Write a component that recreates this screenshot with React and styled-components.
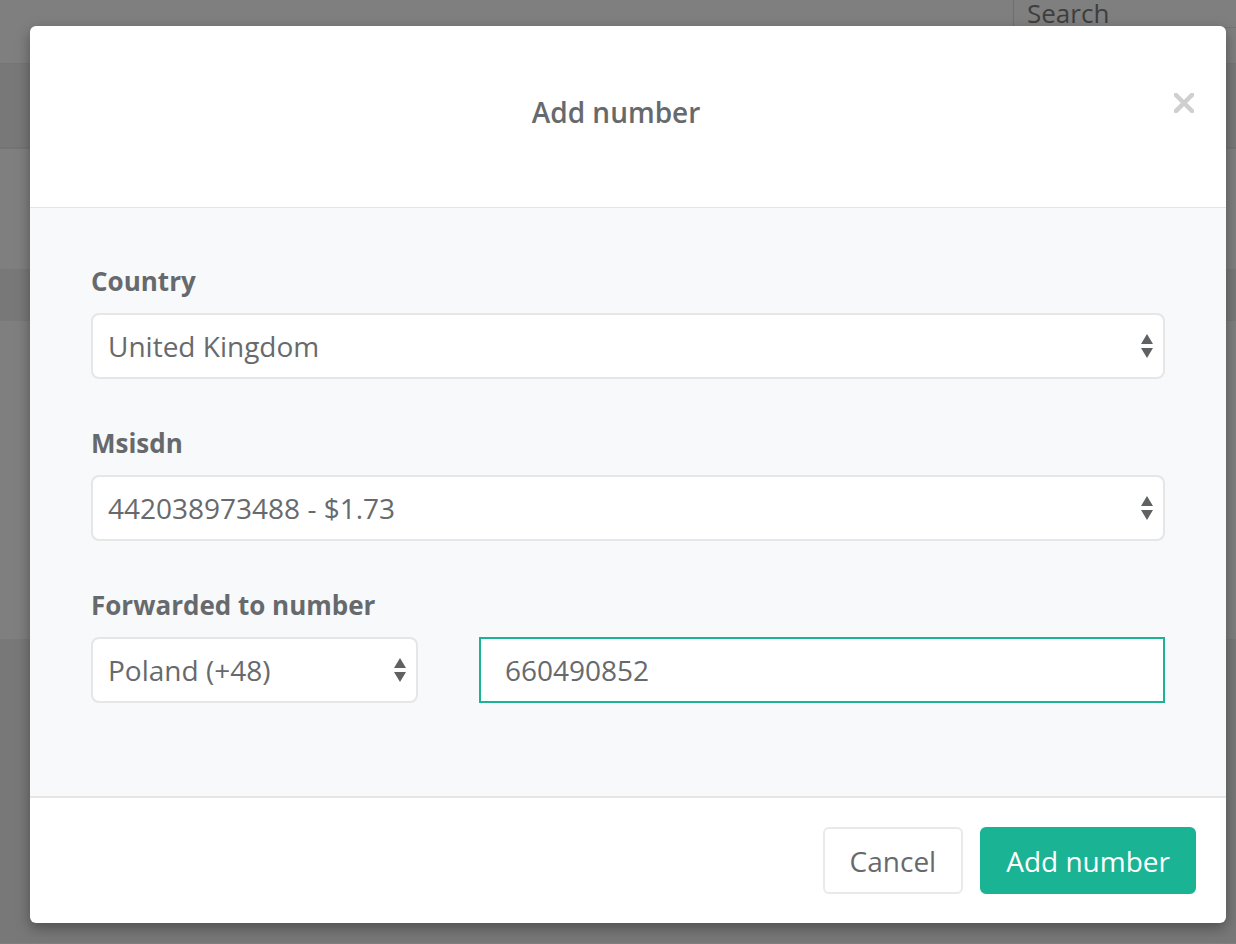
import React from 'react';
import styled, { createGlobalStyle } from 'styled-components';

const GlobalStyle = createGlobalStyle`
  html, body {
    margin: 0;
    padding: 0;
    background: #7f7f7f;
  }
  body {
    font-family: "Open Sans", "Liberation Sans", sans-serif;
    color: #676a6c;
  }
  * { box-sizing: border-box; }
`

//==================== backdrop page ====================//

const Page = styled.div`
  position: relative;
  width: 1236px;
  height: 944px;
  overflow: hidden;
  background: #7f7f7f;
`

const Band = styled.div`
  height: ${props => props.h}px;
  background: ${props => props.dark ? '#787878' : '#7f7f7f'};
  border-bottom: ${props => props.line ? '2px solid #747474' : 'none'};
`

const TopBar = styled.div`
  height: 64px;
  display: flex;
  justify-content: flex-end;
  border-bottom: 1px solid #767676;
`

const SearchBox = styled.div`
  width: 223px;
  height: 44px;
  margin-top: -16px;
  border-left: 1px solid #6e6e6e;
  border-bottom: 1px solid #747474;
  padding-left: 13px;
  font-size: 26px;
  line-height: 58px;
  color: #3e3e3e;
`

//==================== modal ====================//

const Overlay = styled.div`
  position: absolute;
  inset: 0;
  display: flex;
  justify-content: flex-start;
  padding: 26px 0 0 30px;
`

const Modal = styled.div`
  width: 1196px;
  height: 897px;
  background: #fff;
  border-radius: 6px;
  overflow: hidden;
  box-shadow: 0 5px 14px rgba(0, 0, 0, 0.35);
  display: flex;
  flex-direction: column;
`

const Header = styled.div`
  position: relative;
  padding: 66px 64px 75px 40px;
  border-bottom: 1px solid #e5e5e5;
  text-align: center;
`

const Title = styled.h4`
  margin: 0;
  font-size: 28px;
  line-height: 40px;
  font-weight: 600;
  color: #676a6c;
`

const Close = styled.button`
  position: absolute;
  top: 67px;
  right: 32px;
  width: 20px;
  height: 20px;
  padding: 0;
  border: none;
  background: transparent;
  cursor: pointer;
  display: flex;
`

const Body = styled.div`
  flex: 1;
  background: #f8f9fb;
  padding: 55px 61px 0;
`

const Group = styled.div`
  margin-bottom: 46px;
`

const Label = styled.label`
  display: block;
  font-size: 26px;
  font-weight: 700;
  line-height: 36px;
  margin-bottom: 14px;
  color: #676a6c;
`

const Row = styled.div`
  display: grid;
  grid-template-columns: 327px 1fr;
  gap: 61px;
`

const SelectBox = styled.div`
  position: relative;
  height: 66px;
  background: #fff;
  border: 2px solid #e5e6e7;
  border-radius: 8px;
  padding: 0 50px 0 15px;
  display: flex;
  align-items: center;
  font-size: 28px;
  color: #676a6c;
`

const Arrows = styled.span`
  position: absolute;
  right: 8px;
  top: 50%;
  transform: translateY(-50%);
  display: flex;
`

const TextInput = styled.input`
  height: 66px;
  width: 100%;
  border: 2px solid #1ab394;
  border-radius: 0;
  background: #fff;
  padding: 0 24px;
  font-family: inherit;
  font-size: 28px;
  color: #676a6c;
  outline: none;
`

const Footer = styled.div`
  border-top: 2px solid #e5e5e5;
  padding: 29px 30px 29px;
  display: flex;
  justify-content: flex-end;
  gap: 17px;
`

const Button = styled.button`
  height: 67px;
  padding: 0 ${props => props.primary ? '24px' : '25px'};
  font-family: inherit;
  font-size: 28px;
  border-radius: 6px;
  cursor: pointer;
  border: 2px solid ${props => props.primary ? '#1ab394' : '#e7eaec'};
  background: ${props => props.primary ? '#1ab394' : '#fff'};
  color: ${props => props.primary ? '#fff' : '#676a6c'};
`

const UpDown = () => (
  <svg width="16" height="28" viewBox="0 0 16 28">
    <path d="M8 2 L14 12 L2 12 Z" fill="#5f6163" />
    <path d="M8 26 L14 16 L2 16 Z" fill="#5f6163" />
  </svg>
)

const Select = ({ children }) => (
  <SelectBox>
    {children}
    <Arrows><UpDown /></Arrows>
  </SelectBox>
)

export default function App() {
  return (
    <>
      <GlobalStyle />
      <Page>
        <TopBar>
          <SearchBox>Search</SearchBox>
        </TopBar>
        <Band h={85} dark line />
        <Band h={120} />
        <Band h={52} dark />
        <Band h={318} />
        <Band h={304} dark />

        <Overlay>
          <Modal>
            <Header>
              <Title>Add number</Title>
              <Close aria-label="Close">
                <svg width="20" height="20" viewBox="0 0 20 20">
                  <path d="M2 2 L18 18 M18 2 L2 18" stroke="#cfcfcf" strokeWidth="4.5" strokeLinecap="square" />
                </svg>
              </Close>
            </Header>

            <Body>
              <Group>
                <Label>Country</Label>
                <Select>United Kingdom</Select>
              </Group>

              <Group>
                <Label>Msisdn</Label>
                <Select>442038973488 - $1.73</Select>
              </Group>

              <Group>
                <Label>Forwarded to number</Label>
                <Row>
                  <Select>Poland (+48)</Select>
                  <TextInput defaultValue="660490852" />
                </Row>
              </Group>
            </Body>

            <Footer>
              <Button>Cancel</Button>
              <Button primary>Add number</Button>
            </Footer>
          </Modal>
        </Overlay>
      </Page>
    </>
  )
}
